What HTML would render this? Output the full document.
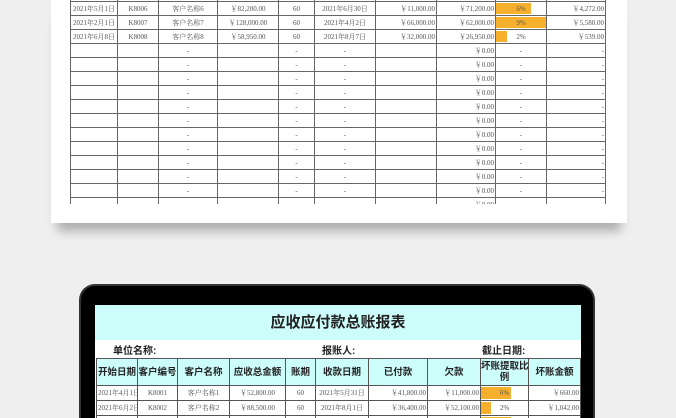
<!DOCTYPE html>
<html style="overflow:hidden;width:676px;height:418px"><head><meta charset="utf-8"><style>
*{margin:0;padding:0;box-sizing:border-box}
body{width:676px;height:418px;overflow:hidden;background:#efefef;position:relative;font-family:"Liberation Serif","Noto Serif CJK SC",serif;}
.card{position:absolute;left:51px;top:0;width:576px;height:223px;background:#fff;box-shadow:0 14px 10px -6px rgba(0,0,0,.28);}
.clip{position:absolute;left:70px;top:0;width:537px;height:204px;overflow:hidden;}
table{border-collapse:collapse;table-layout:fixed;position:absolute;}
td{border:1px solid #666;font-size:7px;color:#555;text-align:center;white-space:nowrap;overflow:hidden;position:relative;padding:0 1px;}
td.r{text-align:right}
.bar{position:absolute;left:0;top:1px;bottom:1px;background:#f6b02d;}
.bar+span{position:relative}
.t1 tr{height:14px}
.mon{position:absolute;left:79px;top:284px;width:516px;height:134px;background:#000;border-radius:16px 16px 0 0;border:2px solid #333;border-bottom:none;}
.scr{position:absolute;left:95px;top:305px;width:486px;height:113px;background:#fff;overflow:hidden;}
.title{position:absolute;left:0;top:0;width:486px;height:35px;background:#ccfdfb;font-family:"Liberation Sans","Noto Sans CJK SC",sans-serif;font-weight:bold;font-size:15px;color:#222;text-align:center;line-height:35px;}
.info{position:absolute;top:37px;font-family:"Liberation Sans","Noto Sans CJK SC",sans-serif;font-weight:bold;font-size:10px;color:#222;}
.t2 td{border-color:#555;}
.t2 th{border:1px solid #555;background:#ccfdfb;font-family:"Liberation Sans","Noto Sans CJK SC",sans-serif;font-size:9.5px;font-weight:bold;color:#222;line-height:11px;height:27px;padding:0;white-space:nowrap;overflow:hidden;}
.t2 tr.d{height:15px}
</style></head><body>
<div class="card"></div>
<div class="clip">
<table class="t1" style="left:0;top:-13px;width:535px">
<colgroup><col style="width:47px"><col style="width:41px"><col style="width:59px"><col style="width:61px"><col style="width:36px"><col style="width:61px"><col style="width:61px"><col style="width:59px"><col style="width:51px"><col style="width:59px"></colgroup>
<tr><td></td><td></td><td></td><td></td><td></td><td></td><td></td><td></td><td></td><td></td></tr>
<tr><td>2021年5月1日</td><td>K8006</td><td>客户名称6</td><td>￥82,200.00</td><td>60</td><td>2021年6月30日</td><td class="r">￥11,000.00</td><td class="r">￥71,200.00</td><td><div class="bar" style="width:35px"></div><span>6%</span></td><td class="r">￥4,272.00</td></tr>
<tr><td>2021年2月1日</td><td>K8007</td><td>客户名称7</td><td>￥128,000.00</td><td>60</td><td>2021年4月2日</td><td class="r">￥66,000.00</td><td class="r">￥62,000.00</td><td><div class="bar" style="width:50px"></div><span>9%</span></td><td class="r">￥5,580.00</td></tr>
<tr><td>2021年6月8日</td><td>K8008</td><td>客户名称8</td><td>￥58,950.00</td><td>60</td><td>2021年8月7日</td><td class="r">￥32,000.00</td><td class="r">￥26,950.00</td><td><div class="bar" style="width:11px"></div><span>2%</span></td><td class="r">￥539.00</td></tr>
<tr><td></td><td></td><td>-</td><td></td><td>-</td><td>-</td><td></td><td class="r">￥0.00</td><td>-</td><td class="r">-</td></tr>
<tr><td></td><td></td><td>-</td><td></td><td>-</td><td>-</td><td></td><td class="r">￥0.00</td><td>-</td><td class="r">-</td></tr>
<tr><td></td><td></td><td>-</td><td></td><td>-</td><td>-</td><td></td><td class="r">￥0.00</td><td>-</td><td class="r">-</td></tr>
<tr><td></td><td></td><td>-</td><td></td><td>-</td><td>-</td><td></td><td class="r">￥0.00</td><td>-</td><td class="r">-</td></tr>
<tr><td></td><td></td><td>-</td><td></td><td>-</td><td>-</td><td></td><td class="r">￥0.00</td><td>-</td><td class="r">-</td></tr>
<tr><td></td><td></td><td>-</td><td></td><td>-</td><td>-</td><td></td><td class="r">￥0.00</td><td>-</td><td class="r">-</td></tr>
<tr><td></td><td></td><td>-</td><td></td><td>-</td><td>-</td><td></td><td class="r">￥0.00</td><td>-</td><td class="r">-</td></tr>
<tr><td></td><td></td><td>-</td><td></td><td>-</td><td>-</td><td></td><td class="r">￥0.00</td><td>-</td><td class="r">-</td></tr>
<tr><td></td><td></td><td>-</td><td></td><td>-</td><td>-</td><td></td><td class="r">￥0.00</td><td>-</td><td class="r">-</td></tr>
<tr><td></td><td></td><td>-</td><td></td><td>-</td><td>-</td><td></td><td class="r">￥0.00</td><td>-</td><td class="r">-</td></tr>
<tr><td></td><td></td><td>-</td><td></td><td>-</td><td>-</td><td></td><td class="r">￥0.00</td><td>-</td><td class="r">-</td></tr>
<tr><td></td><td></td><td>-</td><td></td><td>-</td><td>-</td><td></td><td class="r">￥0.00</td><td>-</td><td class="r">-</td></tr>
</table>
</div>
<div class="mon"></div>
<div class="scr">
<div class="title">应收应付款总账报表</div>
<div class="info" style="left:18px">单位名称:</div>
<div class="info" style="left:227px">报账人:</div>
<div class="info" style="left:387px">截止日期:</div>
<table class="t2" style="left:1px;top:53px;width:484px">
<colgroup><col style="width:41px"><col style="width:40px"><col style="width:52px"><col style="width:56px"><col style="width:30px"><col style="width:53px"><col style="width:59px"><col style="width:53px"><col style="width:48px"><col style="width:52px"></colgroup>
<tr><th>开始日期</th><th>客户编号</th><th>客户名称</th><th>应收总金额</th><th>账期</th><th>收款日期</th><th>已付款</th><th>欠款</th><th>坏账提取比<br>例</th><th>坏账金额</th></tr>
<tr class="d"><td>2021年4月1日</td><td>K8001</td><td>客户名称1</td><td>￥52,800.00</td><td>60</td><td>2021年5月31日</td><td class="r">￥41,800.00</td><td class="r">￥11,000.00</td><td><div class="bar" style="width:30px"></div><span>6%</span></td><td class="r">￥660.00</td></tr>
<tr class="d"><td>2021年6月2日</td><td>K8002</td><td>客户名称2</td><td>￥88,500.00</td><td>60</td><td>2021年8月1日</td><td class="r">￥36,400.00</td><td class="r">￥52,100.00</td><td><div class="bar" style="width:10px"></div><span>2%</span></td><td class="r">￥1,042.00</td></tr>
<tr class="d"><td></td><td></td><td></td><td></td><td></td><td></td><td></td><td></td><td><div class="bar" style="width:30px"></div></td><td></td></tr>
</table>
</div>
</body></html>
